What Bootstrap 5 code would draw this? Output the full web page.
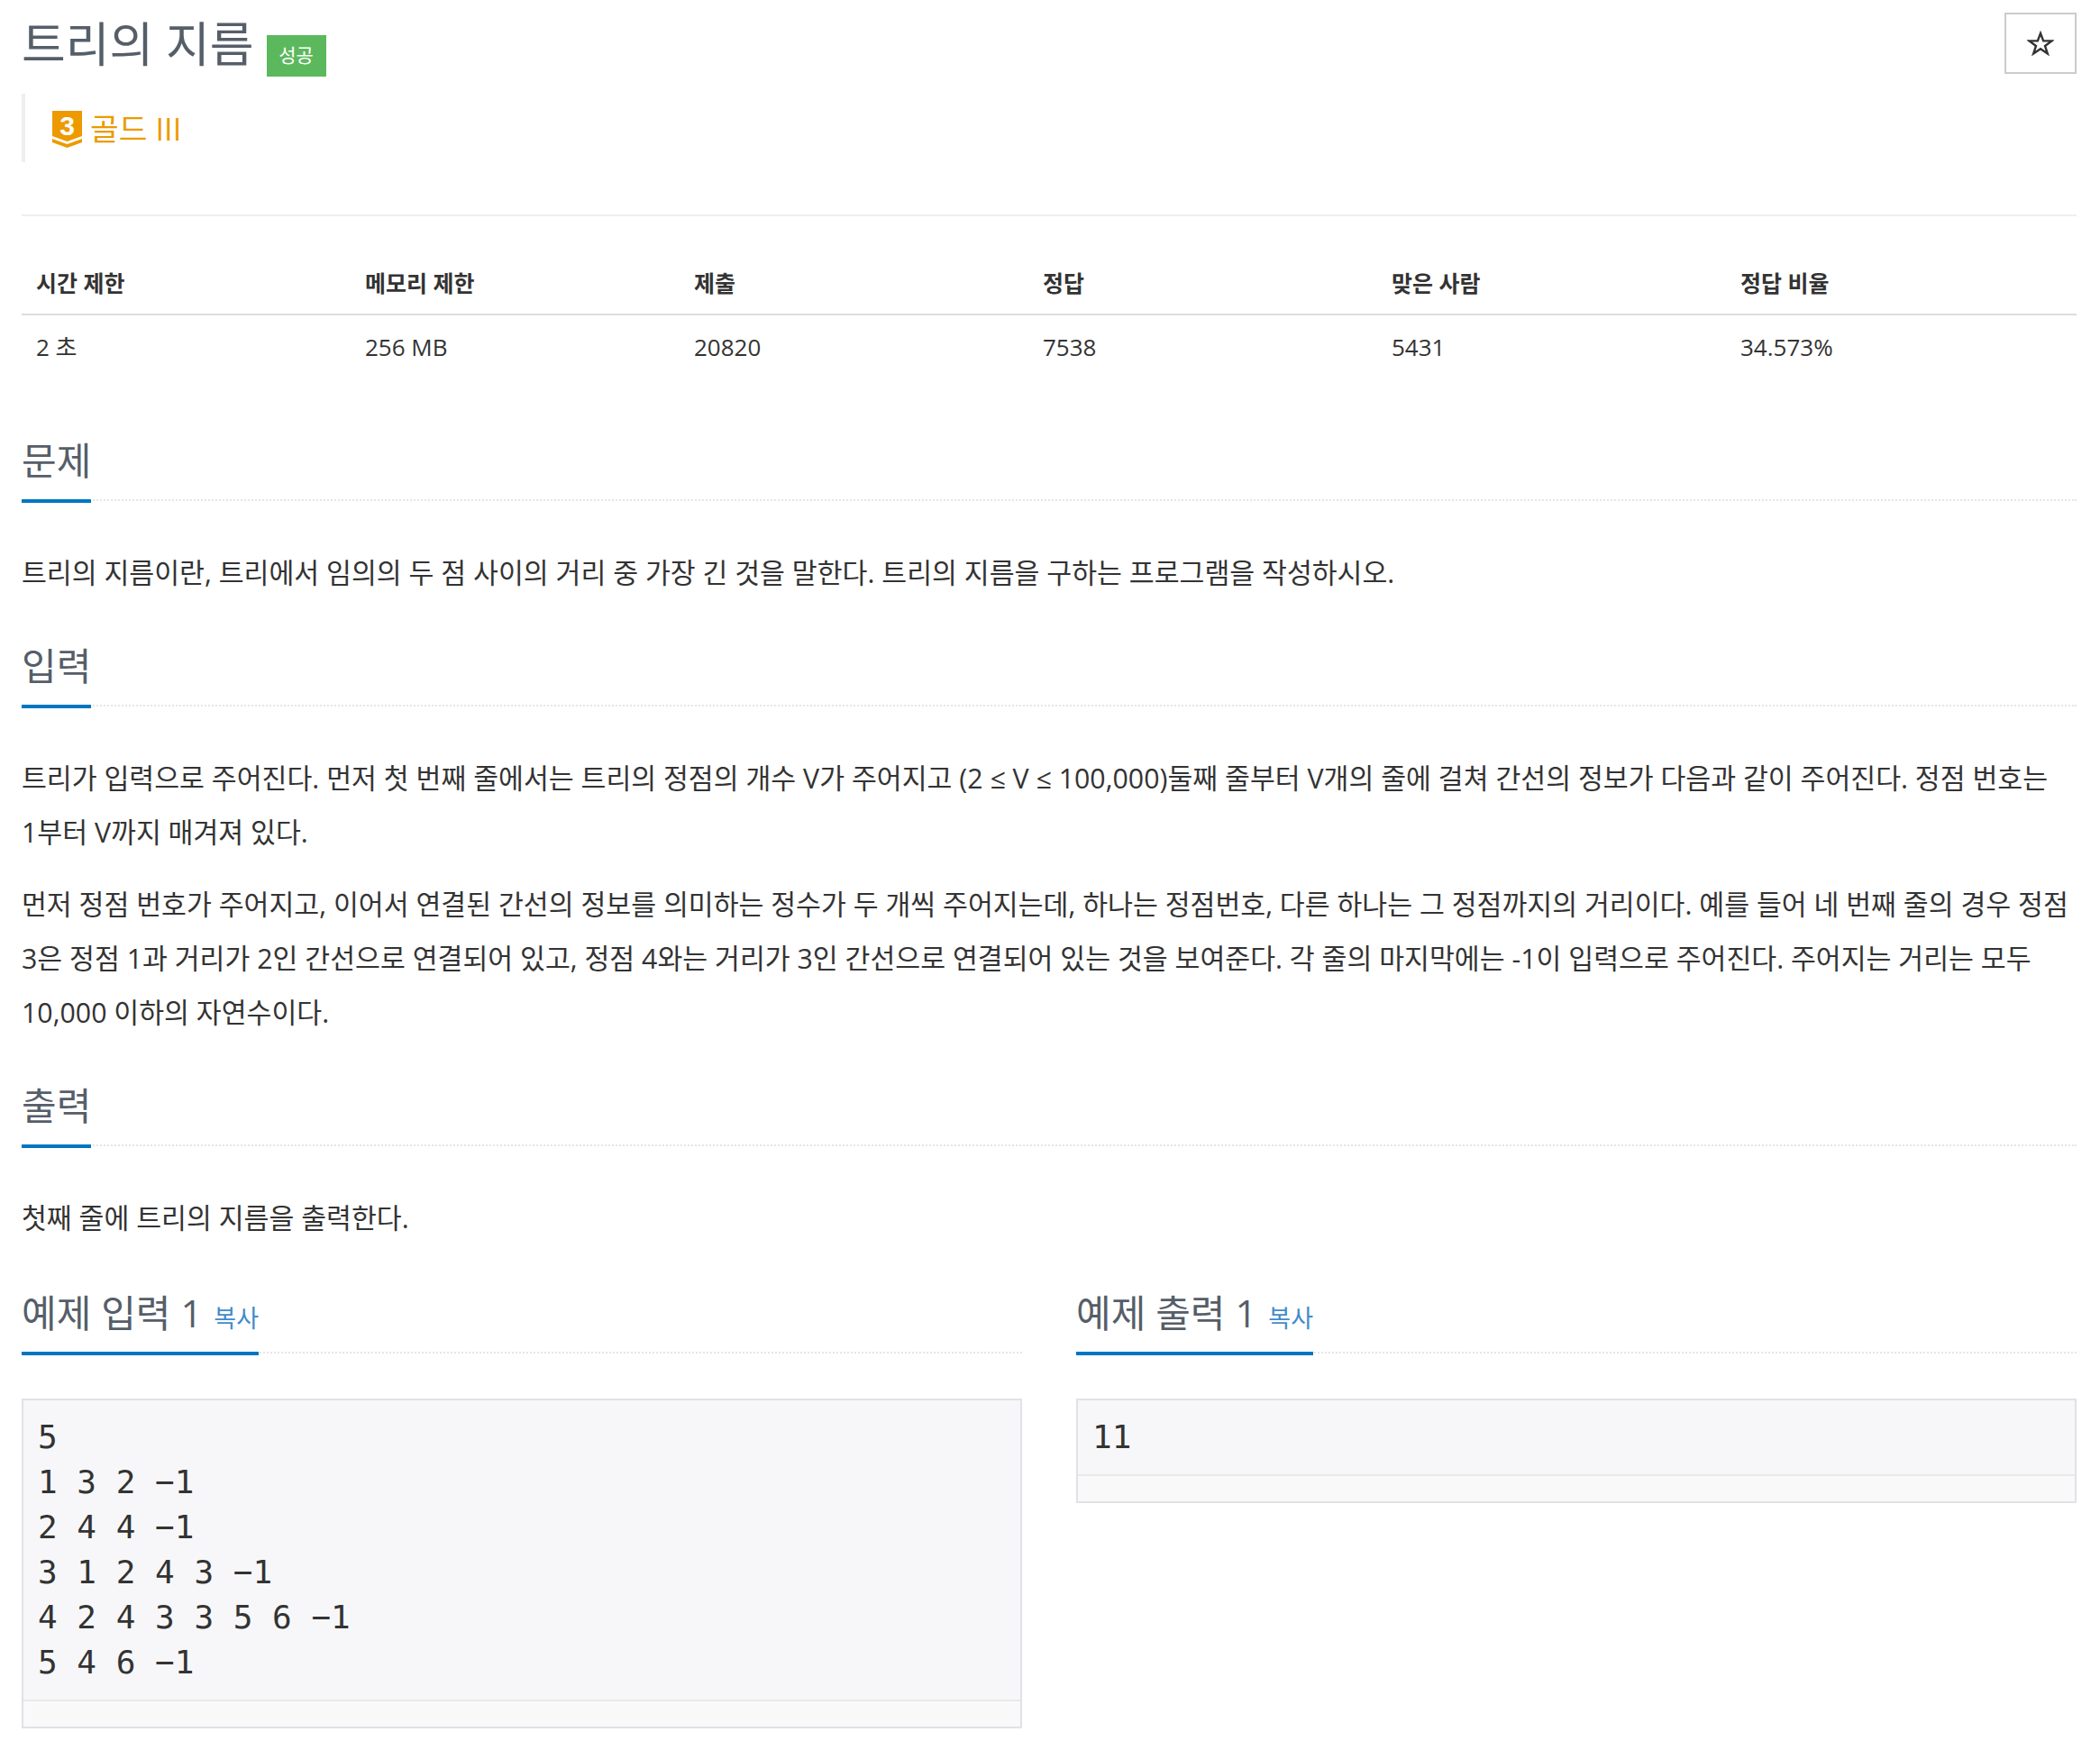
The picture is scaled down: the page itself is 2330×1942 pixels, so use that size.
<!DOCTYPE html>
<html lang="ko">
<head>
  <meta charset="UTF-8">
  <meta name="viewport" content="width=device-width, initial-scale=1">
  <title>트리의 지름</title>
  <link href="https://cdn.jsdelivr.net/npm/bootstrap@5.3.0/dist/css/bootstrap.min.css" rel="stylesheet">
  <style>
    body {
      font-family: "Open Sans", "Noto Sans CJK KR", sans-serif;
      color: #333;
      background: #fff;
      font-size: 28px;
    }
    .page-wrap { padding: 0 26px 0 24px; }
    .prob-title { font-size: 53px; font-weight: 400; color: #555e69; line-height: 63px; height: 63px; margin: 17px 0 0; }
    .res-badge { background: #5cb85c; color: #fff; font-size: 21px; width: 66px; height: 46px; margin-left: 14px; vertical-align: 0; }
    .star-btn { width: 80px; height: 68px; margin-top: 14px; border: 2px solid #ccc; background: #fff; border-radius: 0; }
    .tier-quote { border-left: 4px solid #eee; height: 76px; margin-top: 22px; padding-left: 30px; color: #ec9a00; font-size: 34.5px; gap: 9px; }
    .tier-quote span { margin-top: 2px; }
    .tier-quote svg { margin-top: 2px; }
    .top-rule { border-top: 2px solid #eee; margin-top: 58px; margin-bottom: 38px; }
    .stat-table { table-layout: fixed; font-size: 26px; margin-bottom: 57px; color: #333; }
    .stat-c1 { width: 365px; }
    .stat-c2 { width: 387px; }
    .stat-table th { font-size: 25px; font-weight: 700; padding: 15px 16px; height: 71px; border-bottom: 2px solid #ddd; }
    .stat-table td { padding: 16px; height: 72px; border: 0; }
    .section-head { border-bottom: 2px dotted #e5e5e5; margin-top: 40px; margin-bottom: 50px; height: 78px; }
    .section-head h3 { display: inline-block; font-size: 42px; font-weight: 400; color: #555e69; line-height: 56px; height: 80px; margin: 0; padding-top: 5px; border-bottom: 4px solid #0076c0; }
    .prob-text { font-size: 30.3px; line-height: 60px; margin-bottom: 20px; word-break: keep-all; }
    .copy-link { font-size: 27px; color: #428bca; text-decoration: none; margin-left: 2px; }
    .sample-col { width: 1110px; }
    .sample-col .section-head { margin-top: 22px; }
    .sample-box { border: 2px solid #e1e1e8; background: #f7f7f9; margin: 0; }
    .sample-box pre { font-family: "DejaVu Sans Mono", monospace; font-size: 36px; line-height: 50px; color: #333; padding: 16px; margin: 0; border-bottom: 2px solid #e9e9ec; overflow: hidden; }
    .sample-foot { height: 28px; background: #f9f9f9; }
  </style>
</head>
<body>
  <div class="page-wrap">
    <div class="d-flex justify-content-between align-items-start">
      <h1 class="prob-title">트리의 지름<span class="res-badge d-inline-flex align-items-center justify-content-center">성공</span></h1>
      <button type="button" class="star-btn d-flex align-items-center justify-content-center p-0" aria-label="별">
        <svg width="30" height="28" viewBox="0 0 30 28"><polygon points="15,3 18.2,11.4 27.5,11.4 20,17 22.8,25.5 15,20.3 7.2,25.5 10,17 2.5,11.4 11.8,11.4" fill="none" stroke="#333" stroke-width="2.4"/></svg>
      </button>
    </div>

    <div class="tier-quote d-flex align-items-center">
      <svg width="33" height="41" viewBox="0 0 33 41">
        <path d="M0 0H33V28L16.5 34L0 28Z" fill="#ec9a00"/>
        <path d="M0 31L16.5 37L33 31V35L16.5 41L0 35Z" fill="#ec9a00"/>
        <text x="16.5" y="27" text-anchor="middle" font-family="Liberation Sans" font-weight="700" font-size="30" fill="#fff">3</text>
      </svg>
      <span>골드 III</span>
    </div>

    <div class="top-rule"></div>

    <table class="table stat-table">
      <colgroup>
        <col class="stat-c1"><col class="stat-c1"><col class="stat-c2"><col class="stat-c2"><col class="stat-c2"><col>
      </colgroup>
      <thead>
        <tr><th>시간 제한</th><th>메모리 제한</th><th>제출</th><th>정답</th><th>맞은 사람</th><th>정답 비율</th></tr>
      </thead>
      <tbody>
        <tr><td>2 초</td><td>256 MB</td><td>20820</td><td>7538</td><td>5431</td><td>34.573%</td></tr>
      </tbody>
    </table>

    <section>
      <div class="section-head"><h3>문제</h3></div>
      <p class="prob-text">트리의 지름이란, 트리에서 임의의 두 점 사이의 거리 중 가장 긴 것을 말한다. 트리의 지름을 구하는 프로그램을 작성하시오.</p>
    </section>

    <section>
      <div class="section-head"><h3>입력</h3></div>
      <p class="prob-text">트리가 입력으로 주어진다. 먼저 첫 번째 줄에서는 트리의 정점의 개수 V가 주어지고 (2 ≤ V ≤ 100,000)둘째 줄부터 V개의 줄에 걸쳐 간선의 정보가 다음과 같이 주어진다. 정점 번호는 1부터 V까지 매겨져 있다.</p>
      <p class="prob-text">먼저 정점 번호가 주어지고, 이어서 연결된 간선의 정보를 의미하는 정수가 두 개씩 주어지는데, 하나는 정점번호, 다른 하나는 그 정점까지의 거리이다. 예를 들어 네 번째 줄의 경우 정점 3은 정점 1과 거리가 2인 간선으로 연결되어 있고, 정점 4와는 거리가 3인 간선으로 연결되어 있는 것을 보여준다. 각 줄의 마지막에는 -1이 입력으로 주어진다. 주어지는 거리는 모두 10,000 이하의 자연수이다.</p>
    </section>

    <section>
      <div class="section-head"><h3>출력</h3></div>
      <p class="prob-text">첫째 줄에 트리의 지름을 출력한다.</p>
    </section>

    <div class="d-flex justify-content-between align-items-start">
      <div class="sample-col">
        <div class="section-head"><h3>예제 입력 1 <a href="#" class="copy-link">복사</a></h3></div>
        <div class="sample-box">
          <pre>5
1 3 2 −1
2 4 4 −1
3 1 2 4 3 −1
4 2 4 3 3 5 6 −1
5 4 6 −1</pre>
          <div class="sample-foot"></div>
        </div>
      </div>
      <div class="sample-col">
        <div class="section-head"><h3>예제 출력 1 <a href="#" class="copy-link">복사</a></h3></div>
        <div class="sample-box">
          <pre>11</pre>
          <div class="sample-foot"></div>
        </div>
      </div>
    </div>
  </div>
  <script src="https://cdn.jsdelivr.net/npm/bootstrap@5.3.0/dist/js/bootstrap.bundle.min.js"></script>
</body>
</html>
